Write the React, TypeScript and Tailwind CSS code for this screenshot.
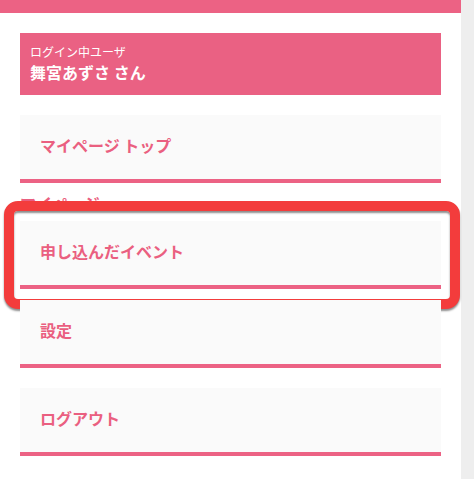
const font = { fontFamily: '"Noto Sans CJK JP", "Noto Sans", sans-serif' }

type Item = { label: string }

function MenuItem({ label }: Item) {
  return (
    <a
      href="#"
      className="relative flex h-[68px] items-center border-b-4 border-[#ec6284] bg-[#fafafa] pb-1 pl-5 text-[16px] font-bold text-[#ea5f80]"
    >
      {label}
    </a>
  )
}

export default function App() {
  return (
    <div className="flex min-h-[479px] w-[474px] bg-white" style={font}>
      <div className="w-[461px]">
        <div className="h-[13px] bg-[#ec6284]" />
        <div className="px-5 pt-5">
          <div className="flex h-[62px] flex-col justify-center bg-[#ea6183] px-[10px] pb-[2px] text-white">
            <p className="text-[12px] leading-[18px]">ログイン中ユーザ</p>
            <p className="text-[16px] font-bold leading-[22px]">舞宮あずさ さん</p>
          </div>

          <nav className="mt-5">
            <MenuItem label="マイページ トップ" />

            <h2 className="mt-[8px] text-[16px] font-bold leading-[24px] text-[#ea5f80]">
              マイページ
            </h2>

            <div className="relative mt-[6px]">
              <div className="absolute -top-[20px] -right-[19px] -bottom-[20px] -left-[16px] rounded-[14px] border-[10px] border-[#f33c3c] bg-white shadow-[0_2px_2px_rgba(0,0,0,0.45),inset_0_2px_2px_rgba(0,0,0,0.45)]" />
              <MenuItem label="申し込んだイベント" />
            </div>

            <div className="mt-[11px]">
              <MenuItem label="設定" />
            </div>

            <div className="mt-5">
              <MenuItem label="ログアウト" />
            </div>
          </nav>
        </div>
      </div>
      <div className="w-[13px] bg-[#eeeeee]" />
    </div>
  )
}
